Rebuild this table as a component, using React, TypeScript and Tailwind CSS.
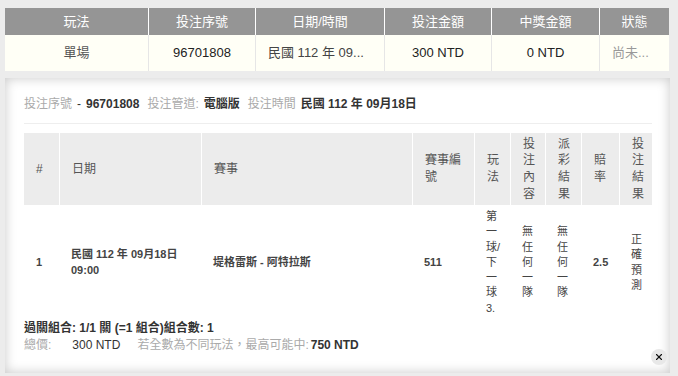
import React from "react";
import { X } from "lucide-react";

const topHeaders = ["玩法", "投注序號", "日期/時間", "投注金額", "中獎金額", "狀態"];
const topWidths = ["w-[143px]", "w-[107px]", "w-[129px]", "w-[107px]", "w-[108px]", "w-[70px]"];

const detailHeaders = ["#", "日期", "賽事", "賽事編號", "玩法", "投注內容", "派彩結果", "賠率", "投注結果"];
const detailWidths = [
	"w-[35px]",
	"w-[142px]",
	"w-[211px]",
	"w-[62px]",
	"w-[36px]",
	"w-[35px]",
	"w-[36px]",
	"w-[38px]",
	"w-[33px]",
];

export default function App() {
	return (
		<div className="min-h-[376px] w-full bg-[#ececec] pt-2 pl-[5px] font-['Liberation_Sans','Noto_Sans_CJK_TC',sans-serif]">
			{/* summary row */}
			<table className="w-[664px] table-fixed border-separate border-spacing-0">
				<colgroup>
					{topWidths.map((w, i) => (
						<col key={i} className={w} />
					))}
				</colgroup>
				<thead>
					<tr>
						{topHeaders.map((h, i) => (
							<th
								key={h}
								className={
									"h-[27px] bg-[#959595] text-center text-[13px] font-normal text-white " +
									(i > 0 ? "border-l border-white" : "")
								}
							>
								{h}
							</th>
						))}
					</tr>
				</thead>
				<tbody>
					<tr className="h-9 bg-[#fffff6] text-center text-[13px] text-[#222]">
						<td className="px-3 text-[#555]">單場</td>
						<td className="border-l border-[#e6e6e6] px-3">96701808</td>
						<td className="border-l border-[#e6e6e6] px-3 text-left text-[#444]">民國 112 年 09...</td>
						<td className="border-l border-[#e6e6e6] px-3">300 NTD</td>
						<td className="border-l border-[#e6e6e6] px-3">0 NTD</td>
						<td className="border-l border-[#e6e6e6] px-3 text-left text-[#999]">尚未...</td>
					</tr>
				</tbody>
			</table>

			{/* detail panel */}
			<div className="relative mt-[7px] h-[295px] w-[665px] bg-white pt-[18px] pr-[18px] pl-[19px] shadow-[inset_0_0_12px_rgba(0,0,0,0.22)]">
				<div className="border-b border-[#eeeeee] pb-[11px] text-[12px] leading-4 text-[#333]">
					<span className="text-[#aaa]">投注序號</span>
					<span className="ml-[5px]">-</span>
					<span className="ml-[5px] font-bold">96701808</span>
					<span className="ml-[8px] text-[#aaa]">投注管道:</span>
					<span className="ml-[5px] font-bold">電腦版</span>
					<span className="ml-[8px] text-[#aaa]">投注時間</span>
					<span className="ml-[5px] font-bold">民國 112 年 09月18日</span>
				</div>

				<table className="mt-[9px] w-[628px] table-fixed border-separate border-spacing-0">
					<colgroup>
						{detailWidths.map((w, i) => (
							<col key={i} className={w} />
						))}
					</colgroup>
					<thead>
						<tr>
							{detailHeaders.map((h, i) => (
								<th
									key={h}
									className={
										"h-[72px] bg-[#ececec] px-3 py-0.5 text-left align-middle text-[12px] leading-[16.7px] font-normal break-all text-[#555] " +
										(i > 0 ? "border-l border-white" : "")
									}
								>
									{h}
								</th>
							))}
						</tr>
					</thead>
					<tbody>
						<tr className="text-[11px] leading-[15.3px] text-[#444]">
							<td className="px-3 py-1 align-middle font-bold">1</td>
							<td className="px-3 py-1 align-middle font-bold">民國 112 年 09月18日 09:00</td>
							<td className="px-3 py-1 align-middle font-bold">堤格雷斯 - 阿特拉斯</td>
							<td className="px-3 py-1 align-middle font-bold">511</td>
							<td className="px-3 py-1 align-middle">第一球/下一球3.</td>
							<td className="px-3 py-1 align-middle">無任何一隊</td>
							<td className="px-3 py-1 align-middle">無任何一隊</td>
							<td className="px-3 py-1 align-middle font-bold">2.5</td>
							<td className="px-3 py-1 align-middle">正確預測</td>
						</tr>
					</tbody>
				</table>

				<div className="text-[12px] leading-[17px] text-[#333]">
					<div className="font-bold">過關組合: 1/1 關 (=1 組合)組合數: 1</div>
					<div>
						<span className="text-[#aaa]">總價:</span>
						<span className="ml-[21px]">300 NTD</span>
						<span className="ml-[17px] text-[#aaa]">若全數為不同玩法，最高可能中:</span>
						<span className="ml-[2px] font-bold">750 NTD</span>
					</div>
				</div>

				<button className="absolute right-[3px] bottom-2 flex h-4 w-4 items-center justify-center rounded-full bg-[#e8e8e8]">
					<X size={10} strokeWidth={2.6} color="#111" />
				</button>
			</div>
		</div>
	);
}
